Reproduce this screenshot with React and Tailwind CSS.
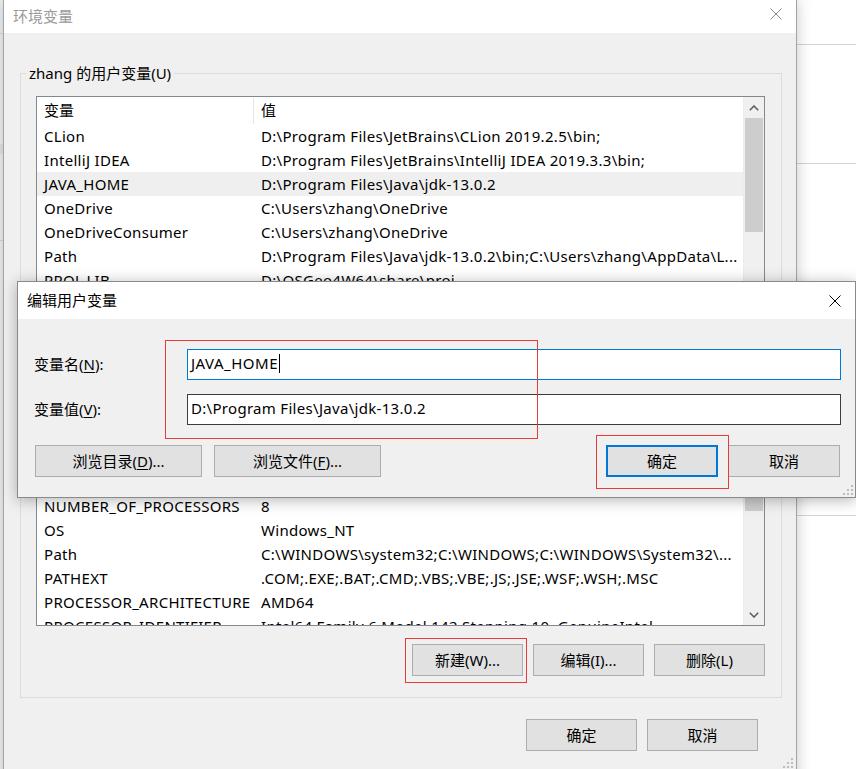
import React from "react";

const upperRows = [
  ["CLion", "D:\\Program Files\\JetBrains\\CLion 2019.2.5\\bin;"],
  ["IntelliJ IDEA", "D:\\Program Files\\JetBrains\\IntelliJ IDEA 2019.3.3\\bin;"],
  ["JAVA_HOME", "D:\\Program Files\\Java\\jdk-13.0.2", true],
  ["OneDrive", "C:\\Users\\zhang\\OneDrive"],
  ["OneDriveConsumer", "C:\\Users\\zhang\\OneDrive"],
  ["Path", "D:\\Program Files\\Java\\jdk-13.0.2\\bin;C:\\Users\\zhang\\AppData\\L..."],
  ["PROJ_LIB", "D:\\OSGeo4W64\\share\\proj"],
];

const lowerRows = [
  ["NUMBER_OF_PROCESSORS", "8"],
  ["OS", "Windows_NT"],
  ["Path", "C:\\WINDOWS\\system32;C:\\WINDOWS;C:\\WINDOWS\\System32\\..."],
  ["PATHEXT", ".COM;.EXE;.BAT;.CMD;.VBS;.VBE;.JS;.JSE;.WSF;.WSH;.MSC"],
  ["PROCESSOR_ARCHITECTURE", "AMD64"],
  ["PROCESSOR_IDENTIFIER", "Intel64 Family 6 Model 142 Stepping 10, GenuineIntel"],
];

function Row({ name, value, selected }) {
  return (
    <div
      className={
        "flex h-[24px] shrink-0 items-center whitespace-nowrap leading-[24px] tracking-[0.3px] " +
        (selected ? "bg-[#efefef]" : "")
      }
    >
      <div className="w-[224px] shrink-0 overflow-hidden pl-[7px]">{name}</div>
      <div className="flex-1 overflow-hidden">{value}</div>
    </div>
  );
}

function Btn({ children, className = "" }) {
  return (
    <div
      className={
        "flex h-[32px] items-center justify-center bg-[#e1e1e1] text-[15px] text-black " +
        className
      }
    >
      {children}
    </div>
  );
}

function CloseX({ color, className = "" }) {
  return (
    <svg width="12" height="12" viewBox="0 0 12 12" className={className}>
      <path d="M0.5 0.5 L11.5 11.5 M11.5 0.5 L0.5 11.5" stroke={color} strokeWidth="1" fill="none" />
    </svg>
  );
}

function Grip() {
  return (
    <svg width="10" height="10" viewBox="0 0 10 10">
      <g fill="#bdbdbd">
        <rect x="8" y="0" width="2" height="2" />
        <rect x="4" y="4" width="2" height="2" />
        <rect x="8" y="4" width="2" height="2" />
        <rect x="0" y="8" width="2" height="2" />
        <rect x="4" y="8" width="2" height="2" />
        <rect x="8" y="8" width="2" height="2" />
      </g>
    </svg>
  );
}

export default function App() {
  return (
    <div className="relative h-[769px] w-[856px] overflow-hidden bg-white font-['Noto_Sans','Noto_Sans_CJK_SC',sans-serif] text-[15px] text-black">
      {/* background app fragments */}
      <div className="absolute left-0 top-0 h-full w-[3px] bg-[#f2f2f2]">
        <div className="mt-[33px] h-px bg-[#d9d9d9]" />
        <div className="mt-[110px] h-[10px] bg-[#e6e6e6]" />
        <div className="mt-[86px] h-px bg-[#d9d9d9]" />
      </div>
      <div className="absolute left-[797px] top-0 h-full w-[59px]">
        <div className="mt-[44px] h-px bg-[#d4d4d4]" />
        <div className="mt-[118px] h-px bg-[#d4d4d4]" />
        <div className="mt-[351px] h-px bg-[#d4d4d4]" />
      </div>

      {/* main window */}
      <div className="absolute left-[3px] top-0 flex h-[800px] w-[794px] flex-col border-x border-[#a3a3a3] bg-[#f0f0f0] shadow-[0_0_14px_rgba(0,0,0,0.22)]">
        <div className="flex h-[33px] shrink-0 items-center justify-between bg-white pl-[9px] pr-[14px]">
          <span className="text-[15px] text-[#9a9a9a]">环境变量</span>
          <CloseX color="#8a8a8a" className="-mt-[5px]" />
        </div>

        {/* group box */}
        <div className="relative ml-[16px] mr-[14px] mt-[40px] border border-[#dcdcdc] pb-[21px]">
          <div className="absolute left-[5px] top-[-12px] bg-[#f0f0f0] px-[3px] leading-[22px]">
            zhang 的用户变量(U)
          </div>

          {/* list */}
          <div className="ml-[15px] mr-[16px] mt-[22px] flex h-[530px] border border-[#828790] bg-white">
            <div className="flex min-w-0 flex-1 flex-col overflow-hidden">
              <div className="flex h-[27px] shrink-0 items-center">
                <div className="flex h-[26px] w-[217px] items-center border-r border-[#e5e5e5] pl-[7px]">
                  变量
                </div>
                <div className="pl-[7px]">值</div>
              </div>
              {upperRows.map(([n, v, s], i) => (
                <Row key={"u" + i} name={n} value={v} selected={s} />
              ))}
              <div className="h-[202px] shrink-0" />
              {lowerRows.map(([n, v], i) => (
                <Row key={"l" + i} name={n} value={v} />
              ))}
            </div>
            {/* scrollbar */}
            <div className="flex w-[21px] shrink-0 flex-col border-l border-[#ececec] bg-[#f0f0f0]">
              <div className="flex h-[21px] shrink-0 items-center justify-center">
                <svg width="10" height="6" viewBox="0 0 10 6">
                  <path d="M0.8 5.2 L5 1 L9.2 5.2" stroke="#606060" strokeWidth="1.6" fill="none" />
                </svg>
              </div>
              <div className="h-[114px] shrink-0 px-[1px]">
                <div className="h-full bg-[#cdcdcd]" />
              </div>
              <div className="h-[248px] shrink-0" />
              <div className="h-[31px] shrink-0 px-[1px]">
                <div className="h-full bg-[#cdcdcd]" />
              </div>
              <div className="flex-1" />
              <div className="flex h-[21px] shrink-0 items-center justify-center">
                <svg width="10" height="6" viewBox="0 0 10 6">
                  <path d="M0.8 0.8 L5 5 L9.2 0.8" stroke="#606060" strokeWidth="1.6" fill="none" />
                </svg>
              </div>
            </div>
          </div>

          <div className="mr-[16px] mt-[18px] flex justify-end gap-[10px]">
            <Btn className="w-[111px] border border-[#adadad]">新建(W)...</Btn>
            <Btn className="w-[111px] border border-[#adadad]">编辑(I)...</Btn>
            <Btn className="w-[111px] border border-[#adadad]">删除(L)</Btn>
          </div>
        </div>

        <div className="mt-[21px] flex justify-end gap-[10px] pr-[38px]">
          <Btn className="w-[111px] border border-[#adadad]">确定</Btn>
          <Btn className="w-[111px] border border-[#adadad]">取消</Btn>
        </div>

        {/* annotation on 新建 */}
        <div className="pointer-events-none absolute left-[401px] top-[638px] h-[45px] w-[122px] border border-[#e8393b]" />
        <div className="absolute left-[779px] top-[758px]">
          <Grip />
        </div>
      </div>

      {/* edit dialog */}
      <div className="absolute left-[17px] top-[281px] flex h-[217px] w-[839px] flex-col border border-[#8a8a8a] bg-[#f0f0f0] shadow-[0_2px_14px_rgba(0,0,0,0.3)]">
        <div className="flex h-[37px] shrink-0 items-center justify-between bg-white pl-[9px] pr-[14px]">
          <span>编辑用户变量</span>
          <CloseX color="#000000" />
        </div>
        <div className="flex flex-col pl-[16px] pr-[14px] pt-[30px]">
          <div className="flex items-center">
            <div className="w-[153px] shrink-0">
              变量名(<span className="underline underline-offset-2">N</span>):
            </div>
            <div className="flex h-[31px] flex-1 items-center whitespace-nowrap border border-[#0078d7] bg-white pb-[3px] pl-[3px] tracking-[0.5px]">
              <span>JAVA_HOME</span>
              <span className="ml-[1px] inline-block h-[19px] w-px bg-black" />
            </div>
          </div>
          <div className="mt-[14px] flex items-center">
            <div className="w-[153px] shrink-0">
              变量值(<span className="underline underline-offset-2">V</span>):
            </div>
            <div className="flex h-[31px] flex-1 items-center whitespace-nowrap border border-[#3c3c3c] bg-white pb-[2px] pl-[3px] tracking-[0.3px]">
              {"D:\\Program Files\\Java\\jdk-13.0.2"}
            </div>
          </div>
          <div className="mt-[20px] flex justify-between">
            <div className="ml-[1px] flex gap-[12px]">
              <Btn className="w-[167px] border border-[#adadad]">
                浏览目录(<span className="underline underline-offset-2">D</span>)...
              </Btn>
              <Btn className="w-[167px] border border-[#adadad]">
                浏览文件(<span className="underline underline-offset-2">F</span>)...
              </Btn>
            </div>
            <div className="mr-[1px] flex gap-[10px]">
              <Btn className="w-[112px] border-2 border-[#0078d7]">确定</Btn>
              <Btn className="w-[112px] border border-[#adadad]">取消</Btn>
            </div>
          </div>
        </div>

        {/* annotations */}
        <div className="pointer-events-none absolute left-[147px] top-[58px] h-[99px] w-[373px] border border-[#e8393b]" />
        <div className="pointer-events-none absolute left-[578px] top-[153px] h-[54px] w-[133px] border border-[#e8393b]" />
        <div className="absolute bottom-[2px] right-[2px]">
          <Grip />
        </div>
      </div>
    </div>
  );
}
